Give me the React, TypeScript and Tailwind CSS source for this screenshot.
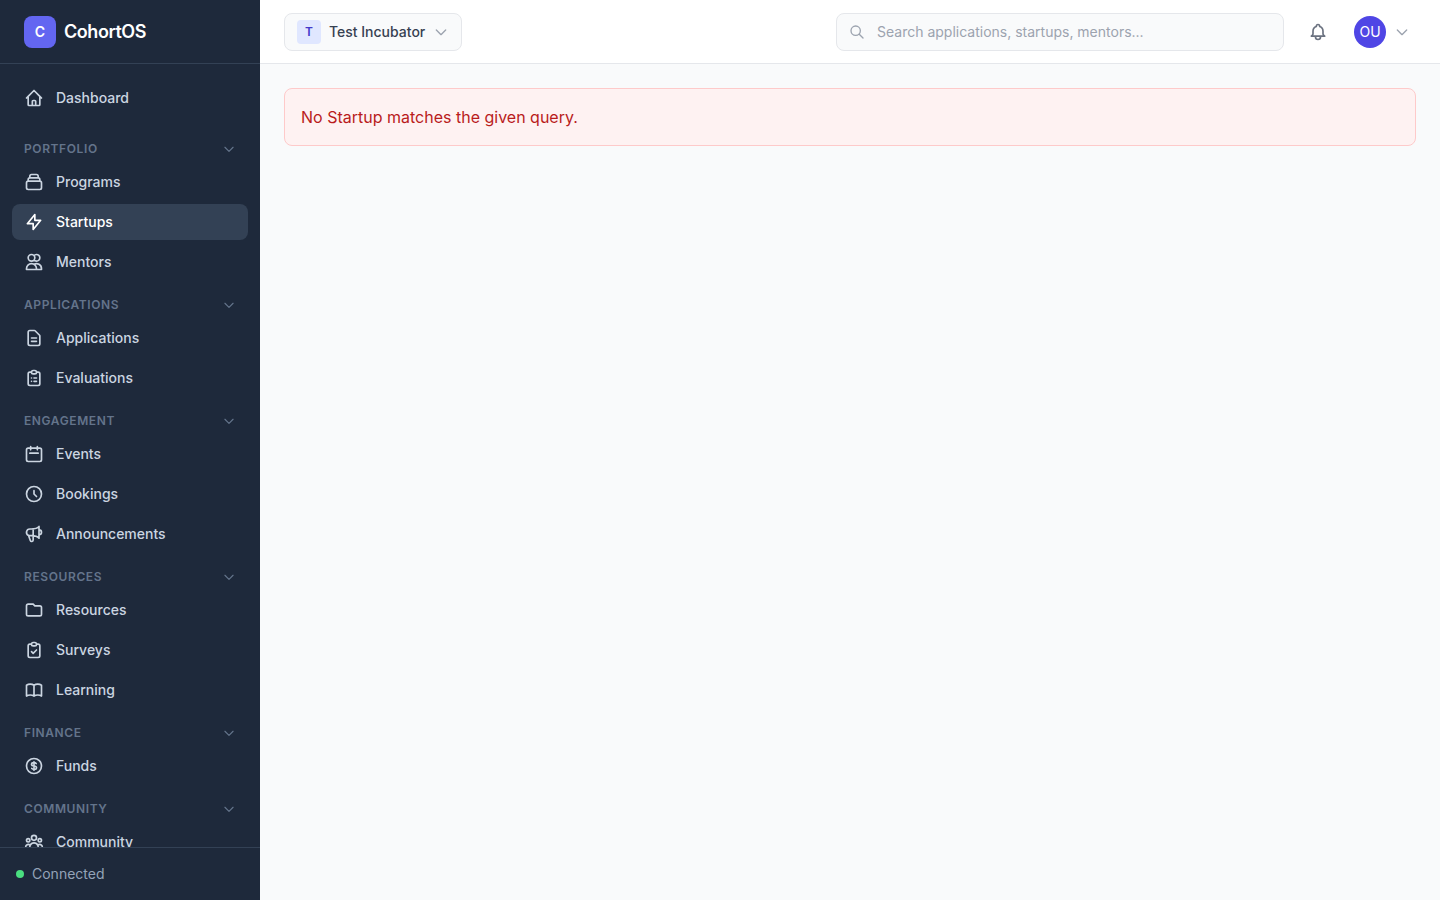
import { useState } from "react";
import type { IconType } from "react-icons";
import {
  HiOutlineBell,
  HiOutlineBookOpen,
  HiOutlineCalendar,
  HiOutlineChevronDown,
  HiOutlineClipboardCheck,
  HiOutlineClipboardList,
  HiOutlineClock,
  HiOutlineCollection,
  HiOutlineCurrencyDollar,
  HiOutlineDocumentText,
  HiOutlineFolder,
  HiOutlineHome,
  HiOutlineLightningBolt,
  HiOutlineSearch,
  HiOutlineSpeakerphone,
  HiOutlineUserGroup,
  HiOutlineUsers,
} from "react-icons/hi";

type NavItem = {
  label: string;
  icon: IconType;
};
type NavSection = {
  title: string;
  items: NavItem[];
};

const sections: NavSection[] = [
  {
    title: "Portfolio",
    items: [
      { label: "Programs", icon: HiOutlineCollection },
      { label: "Startups", icon: HiOutlineLightningBolt },
      { label: "Mentors", icon: HiOutlineUsers },
    ],
  },
  {
    title: "Applications",
    items: [
      { label: "Applications", icon: HiOutlineDocumentText },
      { label: "Evaluations", icon: HiOutlineClipboardList },
    ],
  },
  {
    title: "Engagement",
    items: [
      { label: "Events", icon: HiOutlineCalendar },
      { label: "Bookings", icon: HiOutlineClock },
      { label: "Announcements", icon: HiOutlineSpeakerphone },
    ],
  },
  {
    title: "Resources",
    items: [
      { label: "Resources", icon: HiOutlineFolder },
      { label: "Surveys", icon: HiOutlineClipboardCheck },
      { label: "Learning", icon: HiOutlineBookOpen },
    ],
  },
  {
    title: "Finance",
    items: [{ label: "Funds", icon: HiOutlineCurrencyDollar }],
  },
  {
    title: "Community",
    items: [{ label: "Community", icon: HiOutlineUserGroup }],
  },
];

function NavLink({ item, active }: { item: NavItem; active?: boolean }) {
  return (
    <a
      href="#"
      aria-current={active ? "page" : undefined}
      className={`flex h-9 items-center gap-3 rounded-lg px-3 text-sm font-medium ${
        active
          ? "bg-[#334155] text-white"
          : "text-[#cbd5e1] hover:bg-[#334155]/50"
      }`}
    >
      <item.icon className="size-5 shrink-0" />
      {item.label}
    </a>
  );
}

function Sidebar() {
  const [closed, setClosed] = useState<string[]>([]);

  const toggle = (title: string) => {
    setClosed((prev) =>
      prev.includes(title) ? prev.filter((t) => t !== title) : [...prev, title]
    );
  };

  return (
    <aside className="flex w-[260px] shrink-0 flex-col bg-[#1e293b]">
      <div className="flex h-16 shrink-0 items-center gap-2 border-b border-[#334155] px-6">
        <div className="flex size-8 items-center justify-center rounded-lg bg-[#6366f1] text-sm font-semibold text-white">
          C
        </div>
        <span className="text-lg font-semibold tracking-tight text-white">
          CohortOS
        </span>
      </div>
      <nav className="min-h-0 flex-1 overflow-y-auto px-3 pt-4 [scrollbar-width:none]">
        <NavLink item={{ label: "Dashboard", icon: HiOutlineHome }} />
        <div className="mt-6 flex flex-col gap-4">
          {sections.map((section) => (
            <div key={section.title}>
              <button
                type="button"
                aria-expanded={!closed.includes(section.title)}
                onClick={() => toggle(section.title)}
                className="flex h-[18px] w-full items-center justify-between px-3 text-xs font-semibold tracking-wider text-[#64748b] uppercase"
              >
                {section.title}
                <HiOutlineChevronDown className="size-3.5" />
              </button>
              {!closed.includes(section.title) && (
                <div className="mt-1.5 flex flex-col gap-1">
                  {section.items.map((item) => (
                    <NavLink
                      key={item.label}
                      item={item}
                      active={item.label === "Startups"}
                    />
                  ))}
                </div>
              )}
            </div>
          ))}
        </div>
      </nav>
      <div className="flex h-[53px] shrink-0 items-center gap-2 border-t border-[#334155] px-4 text-sm text-[#94a3b8]">
        <span className="size-2 rounded-full bg-[#4ade80]" />
        Connected
      </div>
    </aside>
  );
}

function Header() {
  return (
    <header className="flex h-16 shrink-0 items-center justify-between border-b border-[#e5e7eb] bg-white px-6">
      <button
        type="button"
        className="flex items-center gap-2 rounded-lg border border-[#e5e7eb] bg-[#f9fafb] px-3 py-1.5 text-sm font-medium text-[#374151]"
      >
        <span className="flex size-6 items-center justify-center rounded bg-[#e0e7ff] text-xs font-semibold text-[#4338ca]">
          T
        </span>
        Test Incubator
        <HiOutlineChevronDown className="size-4 text-[#9ca3af]" />
      </button>
      <div className="flex items-center gap-4">
        <label className="flex h-[38px] w-md items-center gap-3 rounded-lg border border-[#e5e7eb] bg-[#f9fafb] px-3">
          <HiOutlineSearch className="size-4 shrink-0 text-[#9ca3af]" />
          <input
            type="search"
            aria-label="Search"
            placeholder="Search applications, startups, mentors..."
            className="min-w-0 flex-1 bg-transparent text-sm text-[#374151] outline-none placeholder:text-[#9ca3af]"
          />
        </label>
        <div className="flex items-center gap-3">
          <button
            type="button"
            aria-label="Notifications"
            className="p-2 text-[#6b7280]"
          >
            <HiOutlineBell className="size-5" />
          </button>
          <button
            type="button"
            aria-label="Account menu"
            className="flex items-center gap-2 p-1.5"
          >
            <span className="flex size-8 items-center justify-center rounded-full bg-[#4f46e5] text-sm text-white">
              OU
            </span>
            <HiOutlineChevronDown className="size-4 text-[#9ca3af]" />
          </button>
        </div>
      </div>
    </header>
  );
}

export default function App() {
  return (
    <div className="flex h-screen bg-[#f9fafb] font-['Inter',sans-serif]">
      <Sidebar />
      <div className="flex min-w-0 flex-1 flex-col">
        <Header />
        <main className="flex-1 overflow-auto p-6">
          <div
            role="alert"
            className="rounded-lg border border-[#fecaca] bg-[#fef2f2] p-4 text-[#b91c1c]"
          >
            No Startup matches the given query.
          </div>
        </main>
      </div>
    </div>
  );
}
